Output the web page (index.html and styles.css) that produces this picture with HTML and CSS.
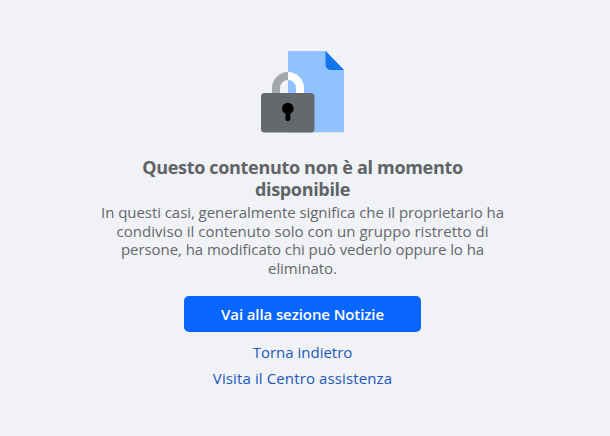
FILE: index.html
```html
<!DOCTYPE html>
<html lang="it">
<head>
<meta charset="utf-8">
<title>Contenuto non disponibile</title>
<link rel="stylesheet" href="styles.css">
</head>
<body>
<main class="notice">
  <svg class="illustration" width="84" height="82" viewBox="0 0 84 82" aria-hidden="true">
    <path fill="#90c2ff" d="M27 0h38l18 19v62.300H27z"/>
    <path fill="#1275ec" d="M64.500 0L83 19H70a5.500 5.500 0 0 1-5.500-5.500z"/>
    <path fill="#a4a7ab" d="M11 43v-6a16 16 0 0 1 16-16v8a8 8 0 0 0-8 8v6z"/>
    <path fill="#fff" d="M27 21a16 16 0 0 1 16 16v6h-8v-6a8 8 0 0 0-8-8z"/>
    <rect fill="#65686c" y="42" width="53.500" height="39.500" rx="3.500"/>
    <circle cx="26.800" cy="57.500" r="5.800"/>
    <rect x="24.500" y="58" width="4.800" height="12" rx="2.100"/>
  </svg>
  <h1 class="title">Questo contenuto non è al momento<br>disponibile</h1>
  <p class="text">In questi casi, generalmente significa che il proprietario ha<br><span class="loose">condiviso il contenuto solo con un gruppo ristretto di</span><br>persone, ha modificato chi può vederlo oppure lo ha<br>eliminato.</p>
  <a class="button" href="#">Vai alla sezione Notizie</a>
  <a class="link" href="#">Torna indietro</a>
  <a class="link loose-link" href="#">Visita il Centro assistenza</a>
</main>
</body>
</html>
```
FILE: styles.css
```css
body {
  margin: 0;
  background: #f0f2f5;
  color: #65686c;
  font-family: "Open Sans", "Noto Sans", sans-serif;
}
.notice {
  display: flex;
  flex-direction: column;
  align-items: center;
  width: 605px;
  height: 385px;
  padding-top: 51px;
  white-space: nowrap;
}
.illustration { display: block; margin-left: 1px; }
.title {
  margin: 23px 0 0;
  font-size: 18px;
  font-weight: 700;
  line-height: 22px;
  letter-spacing: -0.32px;
  text-align: center;
  color: #606367;
}
.text {
  margin: 3px 0 0;
  font-size: 15px;
  line-height: 18.500px;
  letter-spacing: -0.06px;
  text-align: center;
}
.loose { letter-spacing: 0.04px; }
.button {
  box-sizing: border-box;
  width: 237px;
  height: 36px;
  margin: 19px 0 7px;
  border-radius: 5px;
  background: #0866ff;
  color: #fff;
  font-size: 15px;
  font-weight: 600;
  line-height: 36px;
  letter-spacing: -0.1px;
  text-align: center;
  text-decoration: none;
}
.link {
  color: #2058bd;
  font-size: 15px;
  line-height: 26px;
  text-decoration: none;
}
.loose-link { letter-spacing: 0.12px; }
```
